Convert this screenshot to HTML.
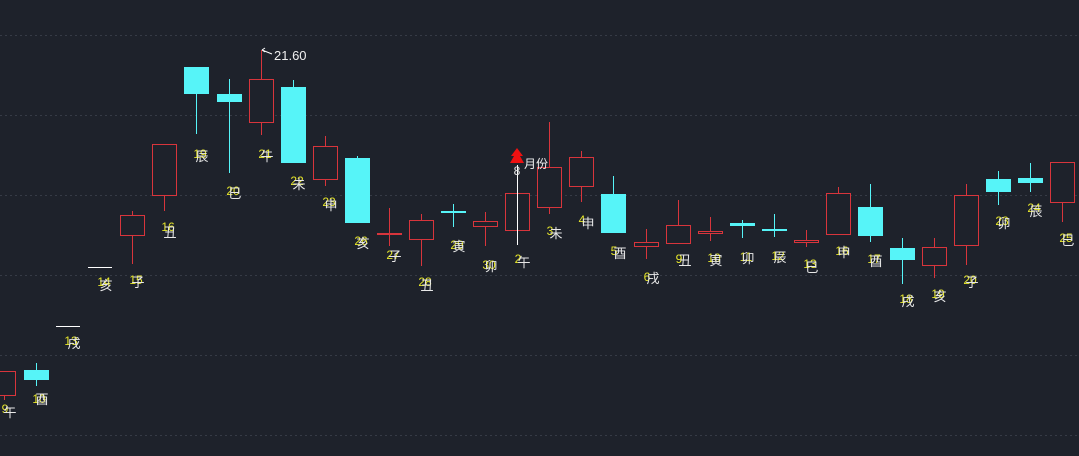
<!DOCTYPE html>
<html><head><meta charset="utf-8"><style>
html,body{margin:0;padding:0;background:#1e222b;width:1079px;height:456px;overflow:hidden}
svg{display:block}
.n{fill:#e6e62a;font:12px "Liberation Sans",sans-serif;text-anchor:middle}
.b{fill:#e8e8e8;font:13px "Liberation Sans","Noto Sans CJK SC",sans-serif;text-anchor:middle}
</style></head><body>
<svg width="1079" height="456" xmlns="http://www.w3.org/2000/svg">
<g stroke="#363b46" stroke-width="1" stroke-dasharray="2 3">
<line x1="0" y1="35.5" x2="1079" y2="35.5"/>
<line x1="0" y1="115.5" x2="1079" y2="115.5"/>
<line x1="0" y1="195.5" x2="1079" y2="195.5"/>
<line x1="0" y1="275.5" x2="1079" y2="275.5"/>
<line x1="0" y1="355.5" x2="1079" y2="355.5"/>
<line x1="0" y1="435.5" x2="1079" y2="435.5"/>
</g>

<g stroke="#d8353c" stroke-width="1" fill="#1e222b">
<line x1="4.5" y1="395" x2="4.5" y2="400"/>
<rect x="-8.5" y="371.5" width="24" height="24"/>
<line x1="132.5" y1="211" x2="132.5" y2="264"/>
<rect x="120.5" y="215.5" width="24" height="20"/>
<line x1="164.5" y1="195" x2="164.5" y2="211"/>
<rect x="152.5" y="144.5" width="24" height="51"/>
<line x1="261.5" y1="50" x2="261.5" y2="135"/>
<rect x="249.5" y="79.5" width="24" height="43"/>
<line x1="325.5" y1="136" x2="325.5" y2="186"/>
<rect x="313.5" y="146.5" width="24" height="33"/>
<line x1="389.5" y1="208" x2="389.5" y2="246"/>
<line x1="421.5" y1="214" x2="421.5" y2="266"/>
<rect x="409.5" y="220.5" width="24" height="19"/>
<line x1="485.5" y1="212" x2="485.5" y2="246"/>
<rect x="473.5" y="221.5" width="24" height="5"/>
<rect x="505.5" y="193.5" width="24" height="37"/>
<line x1="549.5" y1="122" x2="549.5" y2="214"/>
<rect x="537.5" y="167.5" width="24" height="40"/>
<line x1="581.5" y1="151" x2="581.5" y2="202"/>
<rect x="569.5" y="157.5" width="24" height="29"/>
<line x1="646.5" y1="229" x2="646.5" y2="259"/>
<rect x="634.5" y="242.5" width="24" height="4"/>
<line x1="678.5" y1="200" x2="678.5" y2="226"/>
<rect x="666.5" y="225.5" width="24" height="18"/>
<line x1="710.5" y1="217" x2="710.5" y2="241"/>
<rect x="698.5" y="231.5" width="24" height="2"/>
<line x1="806.5" y1="230" x2="806.5" y2="247"/>
<rect x="794.5" y="240.5" width="24" height="2"/>
<line x1="838.5" y1="187" x2="838.5" y2="194"/>
<rect x="826.5" y="193.5" width="24" height="41"/>
<line x1="934.5" y1="238" x2="934.5" y2="278"/>
<rect x="922.5" y="247.5" width="24" height="18"/>
<line x1="966.5" y1="184" x2="966.5" y2="265"/>
<rect x="954.5" y="195.5" width="24" height="50"/>
<line x1="1062.5" y1="202" x2="1062.5" y2="222"/>
<rect x="1050.5" y="162.5" width="24" height="40"/>
</g>
<rect x="377" y="233" width="25" height="2" fill="#d8353c"/>

<g stroke="#56f4f8" stroke-width="1">
<line x1="36.5" y1="363" x2="36.5" y2="386"/>
<line x1="196.5" y1="93" x2="196.5" y2="134"/>
<line x1="229.5" y1="79" x2="229.5" y2="173"/>
<line x1="293.5" y1="80" x2="293.5" y2="88"/>
<line x1="357.5" y1="156" x2="357.5" y2="160"/>
<line x1="453.5" y1="204" x2="453.5" y2="227"/>
<line x1="613.5" y1="176" x2="613.5" y2="195"/>
<line x1="742.5" y1="220" x2="742.5" y2="238"/>
<line x1="774.5" y1="214" x2="774.5" y2="237"/>
<line x1="870.5" y1="184" x2="870.5" y2="242"/>
<line x1="902.5" y1="238" x2="902.5" y2="284"/>
<line x1="998.5" y1="171" x2="998.5" y2="205"/>
<line x1="1030.5" y1="163" x2="1030.5" y2="192"/>
</g>
<g fill="#56f4f8">
<rect x="24" y="370" width="25" height="10"/>
<rect x="184" y="67" width="25" height="27"/>
<rect x="217" y="94" width="25" height="8"/>
<rect x="281" y="87" width="25" height="76"/>
<rect x="345" y="158" width="25" height="65"/>
<rect x="441" y="211" width="25" height="2"/>
<rect x="601" y="194" width="25" height="39"/>
<rect x="730" y="223" width="25" height="3"/>
<rect x="762" y="229" width="25" height="2"/>
<rect x="858" y="207" width="25" height="29"/>
<rect x="890" y="248" width="25" height="12"/>
<rect x="986" y="179" width="25" height="13"/>
<rect x="1018" y="178" width="25" height="5"/>
</g>

<line x1="56" y1="326.5" x2="80" y2="326.5" stroke="#fff"/>
<line x1="88" y1="267.5" x2="112" y2="267.5" stroke="#fff"/>
<line x1="517.5" y1="165" x2="517.5" y2="245" stroke="#fff"/>
<polygon points="517,148 523,156 520,156 524,163 510,163 514,156 511,156" fill="#ee1111"/>

<path d="M262 50 L265 48 M262 50 L265 52 M262 50 L272 54" stroke="#fff" fill="none"/>
<text x="274" y="60" style="fill:#f0f0f0;font:13px 'Liberation Sans',sans-serif">21.60</text>
<text x="517" y="175" class="b" style="font-size:12px">8</text>
<text x="524" y="168" style="fill:#f0f0f0;font:12px 'Liberation Sans','Noto Sans CJK SC',sans-serif">月份</text>

<g>
<text class="n" x="5" y="413">9</text><text class="b" x="10" y="417">午</text>
<text class="n" x="39" y="403">10</text><text class="b" x="42" y="404">酉</text>
<text class="n" x="71" y="345">13</text><text class="b" x="74" y="348">戌</text>
<text class="n" x="104" y="286">14</text><text class="b" x="106" y="290">亥</text>
<text class="n" x="136" y="284">15</text><text class="b" x="138" y="287">子</text>
<text class="n" x="168" y="231">16</text><text class="b" x="170" y="237">丑</text>
<text class="n" x="200" y="158">19</text><text class="b" x="202" y="161">辰</text>
<text class="n" x="233" y="195">20</text><text class="b" x="235" y="198">巳</text>
<text class="n" x="265" y="158">21</text><text class="b" x="267" y="161">午</text>
<text class="n" x="297" y="185">22</text><text class="b" x="299" y="189">未</text>
<text class="n" x="329" y="206">23</text><text class="b" x="331" y="210">申</text>
<text class="n" x="361" y="245">26</text><text class="b" x="363" y="248">亥</text>
<text class="n" x="393" y="259">27</text><text class="b" x="395" y="261">子</text>
<text class="n" x="425" y="286">28</text><text class="b" x="427" y="290">丑</text>
<text class="n" x="457" y="249">29</text><text class="b" x="459" y="251">寅</text>
<text class="n" x="489" y="269">30</text><text class="b" x="491" y="271">卯</text>
<text class="n" x="518" y="263">2</text><text class="b" x="524" y="267">午</text>
<text class="n" x="550" y="235">3</text><text class="b" x="556" y="238">未</text>
<text class="n" x="582" y="224">4</text><text class="b" x="588" y="228">申</text>
<text class="n" x="614" y="255">5</text><text class="b" x="620" y="258">酉</text>
<text class="n" x="647" y="281">6</text><text class="b" x="653" y="283">戌</text>
<text class="n" x="679" y="263">9</text><text class="b" x="685" y="265">丑</text>
<text class="n" x="714" y="262">10</text><text class="b" x="716" y="265">寅</text>
<text class="n" x="746" y="261">11</text><text class="b" x="748" y="263">卯</text>
<text class="n" x="778" y="260">12</text><text class="b" x="780" y="262">辰</text>
<text class="n" x="810" y="268">13</text><text class="b" x="812" y="272">巳</text>
<text class="n" x="842" y="255">16</text><text class="b" x="844" y="257">申</text>
<text class="n" x="874" y="263">17</text><text class="b" x="876" y="266">酉</text>
<text class="n" x="906" y="303">18</text><text class="b" x="908" y="306">戌</text>
<text class="n" x="938" y="298">19</text><text class="b" x="940" y="301">亥</text>
<text class="n" x="970" y="284">20</text><text class="b" x="972" y="287">子</text>
<text class="n" x="1002" y="225">23</text><text class="b" x="1004" y="228">卯</text>
<text class="n" x="1034" y="212">24</text><text class="b" x="1036" y="216">辰</text>
<text class="n" x="1066" y="242">25</text><text class="b" x="1068" y="245">巳</text>
</g>
</svg>
</body></html>
